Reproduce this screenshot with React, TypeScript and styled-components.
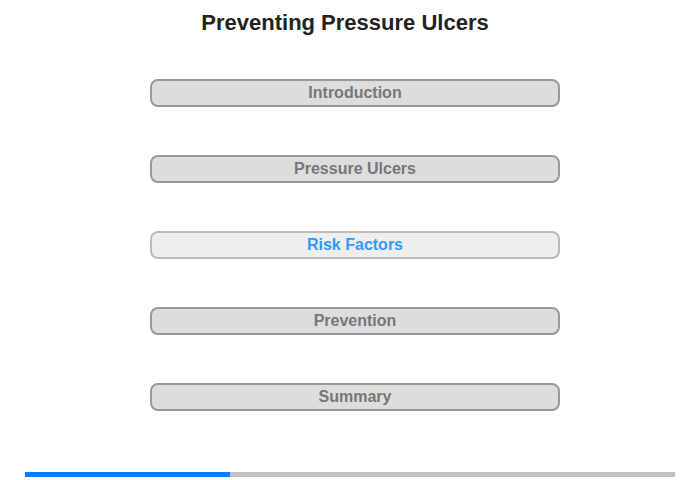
import React from 'react';
import styled, { createGlobalStyle } from 'styled-components';

const GlobalStyle = createGlobalStyle`
  body {
    margin: 0;
    background: #fff;
    font-family: 'Liberation Sans', Arial, sans-serif;
  }
`;

const Page = styled.div`
  width: 700px;
  height: 480px;
  display: flex;
  flex-direction: column;
  overflow: hidden;
`;

const Title = styled.h1`
  margin: 10px 10px 0 0;
  font-size: 22px;
  line-height: 26px;
  font-weight: bold;
  color: #222;
  text-align: center;
`;

const Menu = styled.nav`
  display: flex;
  flex-direction: column;
  gap: 48px;
  width: 410px;
  margin: 43px 0 0 150px;
`;

const MenuButton = styled.button<{ $active?: boolean }>`
  box-sizing: border-box;
  height: 28px;
  width: 100%;
  padding: 0;
  border: 2px solid ${(p) => (p.$active ? '#bbbbbb' : '#999999')};
  border-radius: 8px;
  background: ${(p) => (p.$active ? '#eeeeee' : '#dddddd')};
  color: ${(p) => (p.$active ? '#3399ff' : '#777777')};
  font-family: 'Liberation Sans', Arial, sans-serif;
  font-size: 16px;
  font-weight: bold;
  line-height: 24px;
  cursor: pointer;
`;

const Progress = styled.div`
  margin: 61px 0 0 25px;
  width: 650px;
  height: 5px;
  background: #c0c0c0;
`;

const ProgressFill = styled.div`
  height: 100%;
  background: #0080ff;
`;

const sections = ['Introduction', 'Pressure Ulcers', 'Risk Factors', 'Prevention', 'Summary'];
const activeIndex = 2;

export default function App() {
  return (
    <>
      <GlobalStyle />
      <Page>
        <Title>Preventing Pressure Ulcers</Title>
        <Menu>
          {sections.map((s, i) => (
            <MenuButton key={s} $active={i === activeIndex}>
              {s}
            </MenuButton>
          ))}
        </Menu>
        <Progress>
          <ProgressFill style={{ width: `${(205 / 650) * 100}%` }} />
        </Progress>
      </Page>
    </>
  );
}
